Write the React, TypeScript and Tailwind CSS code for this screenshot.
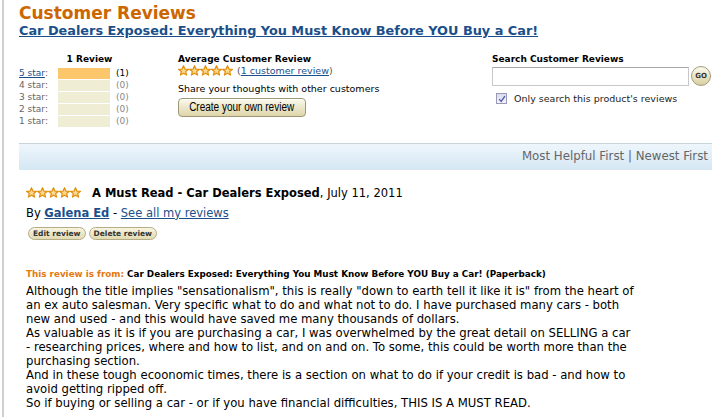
import React from "react";

const Star = () => (
  <svg width="11" height="11" viewBox="0 0 24 24" className="block">
    <polygon
      points="12,1.5 15,8.8 22.8,9.3 16.8,14.3 18.7,22 12,17.8 5.3,22 7.2,14.3 1.2,9.3 9,8.8"
      fill="#fcd88c"
      stroke="#e08e0b"
      strokeWidth="2.6"
      strokeLinejoin="round"
    />
  </svg>
);

const Stars = () => (
  <span className="inline-flex">
    <Star />
    <Star />
    <Star />
    <Star />
    <Star />
  </span>
);

const rows = [
  { label: "5 star", count: 1, link: true },
  { label: "4 star", count: 0 },
  { label: "3 star", count: 0 },
  { label: "2 star", count: 0 },
  { label: "1 star", count: 0 },
];

const body = [
  'Although the title implies "sensationalism", this is really "down to earth tell it like it is" from the heart of',
  "an ex auto salesman. Very specific what to do and what not to do. I have purchased many cars - both",
  "new and used - and this would have saved me many thousands of dollars.",
  "As valuable as it is if you are purchasing a car, I was overwhelmed by the great detail on SELLING a car",
  "- researching prices, where and how to list, and on and on. To some, this could be worth more than the",
  "purchasing section.",
  "And in these tough ecoonomic times, there is a section on what to do if your credit is bad - and how to",
  "avoid getting ripped off.",
  "So if buying or selling a car - or if you have financial difficulties, THIS IS A MUST READ.",
];

export default function App() {
  return (
    <div className="h-[417px] w-[725px] overflow-hidden bg-white font-['DejaVu_Sans',Verdana,sans-serif] text-black">
      <div className="ml-[2px] h-full border-l-2 border-[#cfcfcf] pl-[15px]">
        <div className="pt-[3px] text-[17px] font-bold leading-[20px] text-[#cc6600]">Customer Reviews</div>
        <div className="text-[12.85px] font-bold leading-[16px] text-[#1a4f8a] underline">
          Car Dealers Exposed: Everything You Must Know Before YOU Buy a Car!
        </div>

        <div className="mt-[14px] flex">
          <div className="w-[159px]">
            <div className="w-[141px] text-center text-[9px] font-bold leading-[12px]">1 Review</div>
            <div className="mt-[3px] flex flex-col gap-[1.5px]">
              {rows.map((r) => (
                <div key={r.label} className="flex h-[10.5px] items-center text-[9px] leading-[10px]">
                  <span className="w-[39px]">
                    {r.link ? (
                      <span className="text-[#1a4f8a] underline">{r.label}</span>
                    ) : (
                      <span className="text-[#666]">{r.label}</span>
                    )}
                    <span className="text-[#666]">:</span>
                  </span>
                  <span className={`h-[10.5px] w-[52px] ${r.count ? "bg-[#fcc76a]" : "bg-[#efedd3]"}`} />
                  <span className={`ml-[6px] ${r.count ? "text-black" : "text-[#888]"}`}>({r.count})</span>
                </div>
              ))}
            </div>
          </div>

          <div className="w-[314px]">
            <div className="text-[9px] font-bold leading-[12px]">Average Customer Review</div>
            <div className="flex items-center text-[9.5px] leading-[11px]">
              <Stars />
              <span className="ml-[4px] text-[#555]">
                (<span className="text-[#1a4f8a] underline">1 customer review</span>)
              </span>
            </div>
            <div className="mt-[7px] text-[9.5px] leading-[12px]">Share your thoughts with other customers</div>
            <button className="mt-[3px] flex h-[19px] w-[128px] items-center justify-center overflow-hidden rounded-[4px] border border-[#9e9878] bg-gradient-to-b from-[#fbf9ec] to-[#ddd5a8] font-['Liberation_Sans',sans-serif] text-[12.5px] leading-[17px] text-black shadow-[inset_0_1px_0_#fff]">
              <span className="inline-block shrink-0 scale-x-[0.8] whitespace-nowrap">Create your own review</span>
            </button>
          </div>

          <div className="w-[220px]">
            <div className="text-[9px] font-bold leading-[12px]">Search Customer Reviews</div>
            <div className="mt-[1px] flex items-center">
              <div className="h-[19px] w-[197px] border border-[#c8c8c8] border-t-[#a8a8a8] bg-white" />
              <div className="ml-[2px] flex h-[20px] w-[20px] items-center justify-center rounded-full border border-[#a39c78] bg-gradient-to-b from-[#fbf9ee] to-[#d9d0a0] text-[7px] font-bold text-[#333]">
                GO
              </div>
            </div>
            <div className="mt-[7px] flex items-center">
              <div className="ml-[4px] flex h-[11px] w-[11px] items-center justify-center border border-[#9a9ab8] bg-gradient-to-b from-[#dcdcec] to-[#f4f4fa]">
                <svg width="8" height="8" viewBox="0 0 10 10">
                  <path d="M1.5 5.2 L4 8 L8.6 1.5" fill="none" stroke="#4a5aa8" strokeWidth="1.6" />
                </svg>
              </div>
              <span className="ml-[7px] text-[9.5px] leading-[11px] text-[#222]">Only search this product's reviews</span>
            </div>
          </div>
        </div>

        <div className="mt-[16px] flex h-[27px] w-[693px] items-center justify-end border-t border-[#c8d4dc] bg-gradient-to-b from-[#eef6fc] to-[#d4e7f4] pr-[4px] text-[11.8px] text-[#666]">
          Most Helpful First | Newest First
        </div>

        <div className="pl-[7px]">
          <div className="mt-[16px] flex items-center text-[11.5px] leading-[14px]">
            <Stars />
            <span className="ml-[11px]">
              <span className="font-bold">A Must Read - Car Dealers Exposed</span>, July 11, 2011
            </span>
          </div>
          <div className="mt-[6px] text-[11.5px] leading-[14px]">
            By <span className="font-bold text-[#1a4f8a] underline">Galena Ed</span> -{" "}
            <span className="text-[#1a4f8a] underline">See all my reviews</span>
          </div>
          <div className="mt-[7px] flex gap-[3px] pl-[2px]">
            <span className="h-[13px] rounded-full border border-[#b5ad85] bg-gradient-to-b from-[#f8f4e0] to-[#e2dab2] px-[4px] text-[7.5px] font-bold leading-[11px] text-[#333]">
              Edit review
            </span>
            <span className="h-[13px] rounded-full border border-[#b5ad85] bg-gradient-to-b from-[#f8f4e0] to-[#e2dab2] px-[4px] text-[7.5px] font-bold leading-[11px] text-[#333]">
              Delete review
            </span>
          </div>

          <div className="mt-[28px] whitespace-nowrap text-[8.8px] font-bold leading-[12px]">
            <span className="text-[#e47911]">This review is from:</span>{" "}
            <span>Car Dealers Exposed: Everything You Must Know Before YOU Buy a Car! (Paperback)</span>
          </div>
          <div className="mt-[4px] text-[11.67px] leading-[14.1px]">
            {body.map((l, i) => (
              <div key={i} className="whitespace-nowrap">
                {l}
              </div>
            ))}
          </div>
        </div>
      </div>
    </div>
  );
}
